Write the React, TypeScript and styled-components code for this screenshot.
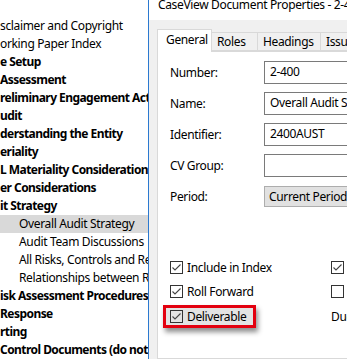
import React from 'react';
import styled, { createGlobalStyle } from 'styled-components';

const GlobalStyle = createGlobalStyle`
  body {
    margin: 0;
    overflow: hidden;
    font-family: 'Segoe UI', 'Noto Sans', 'Open Sans', sans-serif;
    font-size: 12px;
    letter-spacing: -0.35px;
    color: #000;
  }
`;

const Screen = styled.div`
  display: flex;
  width: 347px;
  height: 359px;
  overflow: hidden;
  background: #fff;
`;

const TreePanel = styled.div`
  width: 148px;
  flex-shrink: 0;
  padding-top: 17px;
  overflow: hidden;
  background: #fff;
`;

const TreeRow = styled.div<{ $bold?: boolean; $child?: boolean; $selected?: boolean }>`
  height: 18px;
  line-height: 18px;
  white-space: nowrap;
  padding-left: ${(p) => (p.$child ? '19px' : '0')};
  font-weight: ${(p) => (p.$bold ? 700 : 400)};
  letter-spacing: ${(p) => (p.$bold ? '-0.55px' : '-0.35px')};
  background: ${(p) => (p.$selected ? '#d9d9d9' : 'transparent')};
`;

const Dialog = styled.div`
  flex: 1;
  display: flex;
  flex-direction: column;
  min-width: 0;
  border-left: 1px solid #2b79d0;
  background: #f0f0f0;
`;

const TitleBar = styled.div`
  height: 20px;
  flex-shrink: 0;
  padding-left: 9px;
  background: #fff;
  line-height: 10px;
  white-space: nowrap;
  overflow: hidden;
`;

const Body = styled.div`
  flex: 1;
  display: flex;
  flex-direction: column;
  padding: 8px 0 0 8px;
  min-width: 0;
`;

const TabStrip = styled.div`
  display: flex;
  align-items: flex-end;
  height: 23px;
  white-space: nowrap;
  position: relative;
  z-index: 1;
`;

const Tab = styled.div<{ $active?: boolean; $w: number }>`
  width: ${(p) => p.$w}px;
  flex-shrink: 0;
  box-sizing: border-box;
  height: ${(p) => (p.$active ? '23px' : '19px')};
  line-height: ${(p) => (p.$active ? '19px' : '18px')};
  padding-left: ${(p) => (p.$active ? '8px' : '5px')};
  border: 1px solid #d9d9d9;
  border-bottom: ${(p) => (p.$active ? 'none' : '1px solid #d9d9d9')};
  border-left: ${(p) => (p.$active ? '1px solid #d9d9d9' : 'none')};
  background: ${(p) => (p.$active ? '#fff' : '#f0f0f0')};
  margin-bottom: ${(p) => (p.$active ? '-1px' : '0')};
`;

const Panel = styled.div`
  flex: 1;
  background: #fff;
  border: 1px solid #d9d9d9;
  border-right: none;
  padding: 9px 0 0 12px;
`;

const Form = styled.div`
  display: grid;
  grid-template-columns: 94px 1fr;
  row-gap: 8px;
  align-items: center;
`;

const Label = styled.div`
  line-height: 23px;
`;

const Field = styled.div`
  height: 23px;
  box-sizing: border-box;
  border: 1px solid #7a7a7a;
  border-right: none;
  padding-left: 5px;
  line-height: 20px;
  white-space: nowrap;
  overflow: hidden;
`;

const Combo = styled.div`
  height: 21px;
  box-sizing: border-box;
  border: 1px solid #adadad;
  border-right: none;
  background: #e1e1e1;
  padding-left: 4px;
  line-height: 19px;
  white-space: nowrap;
  overflow: hidden;
`;

const Options = styled.div`
  display: grid;
  grid-template-columns: 161px 1fr;
  grid-auto-rows: 24.5px;
  margin-top: 47px;
`;

const Option = styled.div<{ $highlight?: boolean }>`
  display: flex;
  align-items: center;
  gap: 4px;
  white-space: nowrap;
  align-self: center;
  justify-self: start;
  ${(p) =>
    p.$highlight &&
    `
    margin-left: -7px;
    padding: 0 7px 0 4px;
    height: 17px;
    border: 3px solid #e3000f;
    background: #e3e3e3;
    box-shadow: 2px 4px 5px rgba(0, 0, 0, 0.45);
  `}
`;

const Box = styled.span<{ $grey?: boolean }>`
  width: 13px;
  height: 13px;
  box-sizing: border-box;
  border: 1px solid #333;
  background: ${(p) => (p.$grey ? '#e3e3e3' : '#fff')};
  display: flex;
  align-items: center;
  justify-content: center;
  flex-shrink: 0;
`;

const Check = ({ on, grey }: { on: boolean; grey?: boolean }) => (
  <Box $grey={grey}>
    {on && (
      <svg width="11" height="11" viewBox="0 0 11 11">
        <path d="M1.5 5.5 L4 8 L9.5 2.5" fill="none" stroke="#444" strokeWidth="1.1" />
      </svg>
    )}
  </Box>
);

const treeItems = [
  { t: 'sclaimer and Copyright' },
  { t: 'orking Paper Index' },
  { t: 'e Setup', b: true },
  { t: 'Assessment', b: true },
  { t: 'reliminary Engagement Activities', b: true },
  { t: 'udit', b: true },
  { t: 'derstanding the Entity', b: true },
  { t: 'eriality', b: true },
  { t: 'L Materiality Considerations', b: true },
  { t: 'er Considerations', b: true },
  { t: 'it Strategy', b: true },
  { t: 'Overall Audit Strategy', c: true, s: true },
  { t: 'Audit Team Discussions', c: true },
  { t: 'All Risks, Controls and Responses', c: true },
  { t: 'Relationships between Risks', c: true },
  { t: 'isk Assessment Procedures', b: true },
  { t: 'Response', b: true },
  { t: 'rting', b: true },
  { t: 'Control Documents (do not roll forward)', b: true },
];

function App() {
  return (
    <Screen>
      <GlobalStyle />
      <TreePanel>
        {treeItems.map((item) => (
          <TreeRow key={item.t} $bold={item.b} $child={item.c} $selected={item.s}>
            {item.t}
          </TreeRow>
        ))}
      </TreePanel>

      <Dialog>
        <TitleBar>CaseView Document Properties - 2-400 Overall Audit Strategy</TitleBar>
        <Body>
          <TabStrip>
            <Tab $active $w={55}>General</Tab>
            <Tab $w={46}>Roles</Tab>
            <Tab $w={63}>Headings</Tab>
            <Tab $w={60}>Issues</Tab>
          </TabStrip>
          <Panel>
            <Form>
              <Label>Number:</Label>
              <Field>2-400</Field>
              <Label>Name:</Label>
              <Field>Overall Audit Strategy</Field>
              <Label>Identifier:</Label>
              <Field>2400AUST</Field>
              <Label>CV Group:</Label>
              <Field />
              <Label>Period:</Label>
              <Combo>Current Period</Combo>
            </Form>

            <Options>
              <Option>
                <Check on />
                Include in Index
              </Option>
              <Option>
                <Check on />
              </Option>
              <Option>
                <Check on />
                Roll Forward
              </Option>
              <Option>
                <Check on={false} />
              </Option>
              <Option $highlight>
                <Check on grey />
                Deliverable
              </Option>
              <Option>Due date:</Option>
            </Options>
          </Panel>
        </Body>
      </Dialog>
    </Screen>
  );
}

export default App;
